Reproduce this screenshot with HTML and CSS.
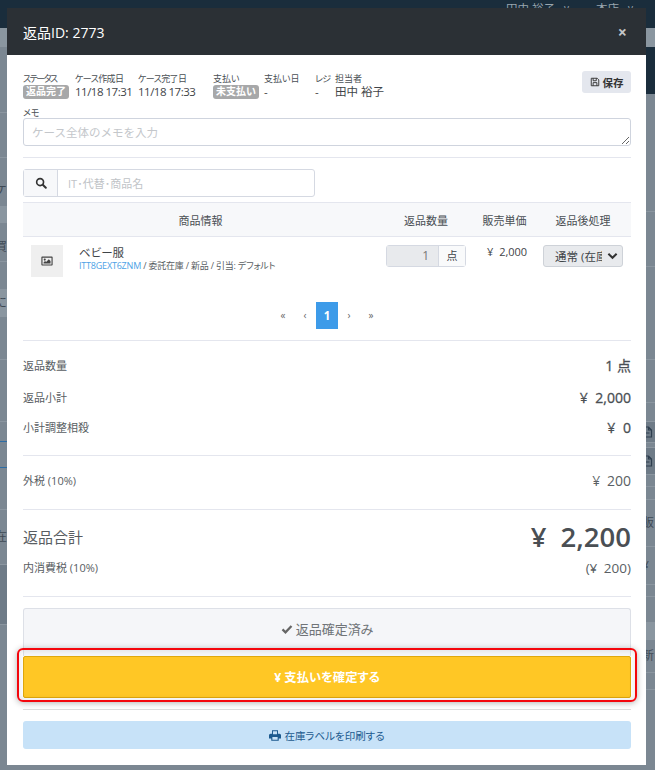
FILE: index.html
```html
<!DOCTYPE html>
<html lang="ja">
<head>
<meta charset="utf-8">
<title>返品ID: 2773</title>
<link rel="stylesheet" href="styles.css">
</head>
<body>
<div class="page">
  <div class="nav"><span>田中 裕子</span><span class="nav-v">v</span><span class="nav-s">本店</span><span class="nav-v">v</span></div>
  <div class="strips">
    <div class="strip">
      <div class="bk h19 light"></div><div class="bk h66"></div><div class="bk h45"></div>
      <div class="bk h49 t pt16"><span class="bt">ケ</span></div><div class="bk h16 light"></div><div class="bk h39 t pt10"><span class="bt">買</span></div><div class="bk h28"></div>
      <div class="bk h27 light t"><span class="bt">には</span></div><div class="bk h43"></div><div class="bk h62"></div><div class="bk h20 blue"></div><div class="bk h26 blue"></div>
      <div class="bk h42"></div><div class="bk h55 t"><span class="bt">在</span></div><div class="bk h60 dim"></div>
    </div>
    <div class="strip right">
      <div class="bk h19 light"></div><div class="bk-dark h47"></div><div class="bk h118"></div><div class="bk h55"></div><div class="bk h93"></div><div class="bk h43"></div><div class="bk h19"></div>
      <div class="bk h21 dim t"><svg viewBox="0 0 12 12" class="doc"><path d="M1.500 1h6l3 3v7h-9zM7.500 1v3h3M3.500 7h5" fill="none" stroke="#2e3e4e" stroke-width="1.200"/></svg></div><div class="bk h5"></div><div class="bk h27 dim t"><svg viewBox="0 0 12 12" class="doc"><path d="M1.500 1h6l3 3v7h-9zM7.500 1v3h3M3.500 7h5" fill="none" stroke="#2e3e4e" stroke-width="1.200"/></svg></div>
      <div class="bk h12"></div><div class="bk h13"></div><div class="bk h47 t"><span class="br">販</span></div><div class="bk h38 t"><span class="br">¥</span></div>
      <div class="bk h12"></div><div class="bk h26"></div><div class="bk h17 light"></div><div class="bk h33 t"><span class="br">新</span></div><div class="bk h17"></div>
    </div>
  </div>
</div>

<div class="modal">
  <header class="m-head">
    <h1>返品ID: 2773</h1>
    <span class="close">×</span>
  </header>
  <div class="m-body">
    <div class="meta">
      <div class="mc w52"><label class="tighter">ステータス</label><span class="badge">返品完了</span></div>
      <div class="mc w64"><label class="tight">ケース作成日</label><span class="val">11/18 17:31</span></div>
      <div class="mc w75"><label class="tight">ケース完了日</label><span class="val">11/18 17:33</span></div>
      <div class="mc w51"><label>支払い</label><span class="badge">未支払い</span></div>
      <div class="mc w51"><label>支払い日</label><span>-</span></div>
      <div class="mc w20"><label class="tight">レジ</label><span>-</span></div>
      <div class="mc grow"><label>担当者</label><span class="staff">田中 裕子</span></div>
      <button class="save"><svg viewBox="0 0 16 16" class="ic10"><path d="M2 2h9.500L14 4.500V14H2zM5 2v4h5V2M5 14V9h6v5" fill="none" stroke="#333" stroke-width="1.500"/></svg> 保存</button>
    </div>
    <div class="memo">
      <label>メモ</label>
      <textarea placeholder="ケース全体のメモを入力"></textarea>
    </div>
    <hr class="hr h1st">
    <div class="search">
      <span class="s-add"><svg viewBox="0 0 16 16" class="ic12"><circle cx="6.800" cy="6.800" r="4.600" fill="none" stroke="#333" stroke-width="2.200"/><path d="M10.400 10.400l4 4" stroke="#333" stroke-width="2.600" stroke-linecap="round"/></svg></span>
      <span class="s-ph">IT･代替･商品名</span>
    </div>
    <div class="thead">
      <div class="c-info">商品情報</div>
      <div class="c-qty">返品数量</div>
      <div class="c-price">販売単価</div>
      <div class="c-after">返品後処理</div>
    </div>
    <div class="trow">
      <div class="c-info info">
        <div class="thumb"><svg viewBox="0 0 16 14" class="ic12"><path fill-rule="evenodd" d="M1.500 1h13a1 1 0 0 1 1 1v10a1 1 0 0 1-1 1h-13a1 1 0 0 1-1-1V2a1 1 0 0 1 1-1zM2 2.500v9h12v-9zM5 3.700a1.400 1.400 0 1 1 0 2.800 1.400 1.400 0 0 1 0-2.800zM3.400 10.400V9l2-2 1.400 1.300 3.600-3.600 2.300 2.300v3.400z" fill="#444"/></svg></div>
        <div class="pname">
          <div class="pn">ベビー服</div>
          <div class="ps"><a>ITT8GEXT6ZNM</a> / 委託在庫 / 新品 / 引当: デフォルト</div>
        </div>
      </div>
      <div class="c-qty"><div class="qty"><span class="q-num">1</span><span class="q-unit">点</span></div></div>
      <div class="c-price price">¥ 2,000</div>
      <div class="c-after"><div class="sel"><span class="sel-t">通常 (在庫)</span><svg viewBox="0 0 12 8" class="ic-ch"><path d="M1.500 1.500L6 6l4.500-4.500" fill="none" stroke="#333" stroke-width="2.200"/></svg></div></div>
    </div>
    <nav class="pager">
      <span>«</span><span>‹</span><span class="cur">1</span><span>›</span><span>»</span>
    </nav>
    <hr class="hr">
    <div class="sum s1"><span>返品数量</span><b class="unit">1 点</b></div>
    <div class="sum s2"><span>返品小計</span><b>¥ 2,000</b></div>
    <div class="sum s3"><span>小計調整相殺</span><b>¥ 0</b></div>
    <hr class="hr hr-a">
    <div class="sum s4"><span>外税 (10%)</span><em>¥ 200</em></div>
    <hr class="hr hr-b">
    <div class="total"><span>返品合計</span><strong>¥ 2,200</strong></div>
    <div class="sum s5"><span>内消費税 (10%)</span><em>(¥ 200)</em></div>
    <hr class="hr hr-c">
    <div class="btn done"><svg viewBox="0 0 16 14" class="ic12"><path d="M2 7.500l4 4 8-8.500" fill="none" stroke="#666" stroke-width="3"/></svg> 返品確定済み</div>
    <div class="pay-wrap">
      <div class="btn pay">¥ 支払いを確定する</div>
    </div>
    <hr class="hr hr-d">
    <div class="btn label"><svg viewBox="0 0 16 14" class="ic11"><path fill-rule="evenodd" d="M4 0h8v4.500h2a2 2 0 0 1 2 2V11h-3v3H3v-3H0V6.500a2 2 0 0 1 2-2h2zM5.300 1.300v4h5.400v-4zM4.500 9v3.700h7V9z" fill="#1c5a8f"/></svg> 在庫ラベルを印刷する</div>
  </div>
</div>
</body>
</html>
```

FILE: styles.css
```css
* { box-sizing: border-box; }
html, body { margin: 0; padding: 0; height: 100%; }
body {
  width: 655px;
  height: 770px;
  overflow: hidden;
  background: #7b8792;
  font-family: "Open Sans", "Noto Sans CJK JP", sans-serif;
  font-feature-settings: "palt";
  color: #3f4448;
  font-size: 12px;
  position: relative;
}
.page { height: 770px; display: flex; flex-direction: column; }
.nav {
  height: 28px;
  background: #1a2d3c;
  display: flex;
  justify-content: flex-end;
  padding: 0 22px 0 0;
  color: #9ba6ae;
  font-size: 11.500px;
  line-height: 17px;
  flex: none;
}
.nav-s { margin-left: 27px; }
.nav-v { font-size: 10px; margin-left: 9px; }
.strips { display: flex; justify-content: space-between; flex: 1; }
.strip { width: 7px; overflow: hidden; }
.strip.right { width: 9px; }
.bk { border-bottom: 1px solid #8b96a0; overflow: hidden; position: relative; }
.bk-dark { background: #1a2d3c; }
.light { background: #8a96a0; }
.dim { background: #6e7b87; }
.blue { border-bottom-color: #2d6da5; }
.t { font-size: 12px; color: #3f4a55; line-height: 1; display: flex; align-items: center; }
.pt16 { padding-top: 16px; }
.pt10 { padding-top: 10px; }
.bt { margin-left: -5px; white-space: nowrap; }
.br { margin-left: -4px; white-space: nowrap; }
.doc { width: 12px; height: 12px; margin-left: -5px; flex: none; }
.h5 { height: 5px; } .h12 { height: 12px; } .h13 { height: 13px; } .h16 { height: 16px; }
.h17 { height: 17px; } .h19 { height: 19px; } .h20 { height: 20px; } .h21 { height: 21px; }
.h26 { height: 26px; } .h27 { height: 27px; } .h28 { height: 28px; } .h33 { height: 33px; }
.h38 { height: 38px; } .h39 { height: 39px; } .h42 { height: 42px; } .h43 { height: 43px; }
.h45 { height: 45px; } .h47 { height: 47px; } .h49 { height: 49px; } .h55 { height: 55px; }
.h60 { height: 60px; } .h62 { height: 62px; } .h66 { height: 66px; } .h93 { height: 93px; }
.h118 { height: 118px; }

.modal {
  position: absolute;
  top: 8px;
  left: 7px;
  width: 639px;
  height: 757px;
  background: #fff;
}
.m-head {
  height: 47px;
  background: #2b3035;
  color: #fff;
  display: flex;
  align-items: center;
  justify-content: space-between;
  padding: 0 19px 0 16px;
}
.m-head h1 { margin: 0; font-size: 14px; font-weight: 400; }
.close { font-size: 16px; font-weight: 700; color: #c4c6c8; line-height: 1; }
.m-body { padding: 16px 15px 0 16px; }

.meta { display: flex; height: 22px; align-items: flex-start; }
.mc { display: flex; flex-direction: column; font-size: 11.500px; line-height: 14px; white-space: nowrap; }
.mc label { font-size: 9px; line-height: 13px; color: #4a4f54; height: 13px; margin-top: 1px; }
.mc .tight { letter-spacing: -0.6px; }
.mc .tighter { letter-spacing: -1.500px; }
.val { letter-spacing: -0.5px; }
.w52 { width: 52px; } .w64 { width: 63px; } .w75 { width: 75px; }
.w51 { width: 51px; } .w20 { width: 20px; }
.grow { flex: 1; }
.badge {
  align-self: flex-start;
  background: #a7a8a9;
  color: #fff;
  font-size: 10px;
  font-weight: 700;
  line-height: 13px;
  height: 14px;
  padding: 0 3px;
  border-radius: 3px;
}
.staff { font-size: 11.500px; letter-spacing: 0; }
.save {
  width: 49px;
  height: 22px;
  border: 0;
  border-radius: 3px;
  background: #e4e7ee;
  color: #333;
  font: 700 10.500px "Open Sans", "Noto Sans CJK JP", sans-serif;
  display: flex;
  align-items: center;
  justify-content: center;
  gap: 3px;
  padding: 0;
}
.ic10 { width: 10px; height: 10px; }
.ic11 { width: 12px; height: 11px; }
.ic12 { width: 12px; height: 12px; }

.memo { margin-top: 14px; }
.memo label { display: block; font-size: 9px; line-height: 11px; height: 11px; color: #4a4f54; }
.memo textarea {
  display: block;
  width: 100%;
  height: 28px;
  border: 1px solid #cfd4de;
  border-radius: 3px;
  padding: 5px 8px;
  font: 11.500px "Open Sans", "Noto Sans CJK JP", sans-serif;
  resize: vertical;
  outline: 0;
}
.memo textarea::placeholder { color: #c4c7cb; }

.hr { border: 0; border-top: 1px solid #e4e6ee; margin: 0; height: 0; }
.h1st { margin-top: 11px; }

.search {
  margin-top: 11px;
  width: 292px;
  height: 28px;
  border: 1px solid #d5d9e2;
  border-radius: 3px;
  display: flex;
  align-items: center;
}
.s-add {
  width: 34px;
  height: 100%;
  background: #f7f8fa;
  border-right: 1px solid #d5d9e2;
  display: flex;
  align-items: center;
  justify-content: center;
}
.s-ph { margin-left: 10px; color: #c0c3c7; font-size: 11px; }

.thead {
  margin-top: 5px;
  display: flex;
  height: 35px;
  background: #f7f8fa;
  border-top: 1px solid #e4e6ee;
  border-bottom: 1px solid #e4e6ee;
  align-items: center;
  font-size: 11px;
  color: #4a4f54;
  text-align: center;
}
.c-info { width: 355px; }
.c-qty { width: 96px; }
.c-price { width: 61px; }
.c-after { flex: 1; }
.trow { display: flex; height: 65px; align-items: flex-start; }
.info { display: flex; padding: 8px 0 0 8px; }
.thumb {
  width: 32px;
  height: 32px;
  background: #efefef;
  display: flex;
  align-items: center;
  justify-content: center;
}
.pname { margin-left: 16px; }
.pn { font-size: 11.500px; line-height: 16px; margin-top: 0; }
.ps { font-size: 9px; line-height: 13px; color: #585d62; margin-top: -2px; white-space: nowrap; letter-spacing: -0.2px; }
.ps a { color: #4da2e6; }
.trow .c-qty { padding: 8px 0 0 8px; }
.qty {
  width: 80px;
  height: 22px;
  border: 1px solid #d5d9e2;
  border-radius: 3px;
  display: flex;
  font-size: 12px;
}
.q-num {
  flex: 1;
  background: #e8eaed;
  text-align: right;
  padding-right: 9px;
  line-height: 20px;
  color: #777;
  border-right: 1px solid #d5d9e2;
}
.q-unit { width: 26px; text-align: center; line-height: 20px; background: #f9fafb; font-size: 11px; }
.price { font-size: 11px; padding: 7px 0 0 13px; text-align: left; white-space: nowrap; line-height: 15px; word-spacing: 3px; }
.trow .c-after { padding: 8px 0 0 8px; }
.sel {
  width: 80px;
  height: 22px;
  border: 1px solid #ced2d8;
  border-radius: 3px;
  background: #e8eaed;
  display: flex;
  align-items: center;
  padding: 0 4px 0 11px;
  font-size: 11.500px;
  overflow: hidden;
}
.sel-t { width: 47px; overflow: hidden; white-space: nowrap; flex: none; }
.ic-ch { width: 11px; height: 8px; margin-left: 5px; }

.pager {
  display: flex;
  justify-content: center;
  height: 38px;
  font-size: 10px;
  color: #666;
}
.pager span { width: 22px; height: 27px; text-align: center; line-height: 27px; }
.pager .cur { background: #3d9be9; color: #fff; font-weight: 700; font-size: 11.500px; }

.sum { display: flex; justify-content: space-between; align-items: flex-start; font-size: 11px; color: #585d62; }
.sum b { font-size: 14px; font-weight: 400; color: #4a4f54; word-spacing: 4px; -webkit-text-stroke: 0.3px #4a4f54; }
.sum b.unit { word-spacing: 0; }
.sum em { font-style: normal; font-size: 14px; font-weight: 400; color: #5a5f64; word-spacing: 3px; }
.s1 { margin-top: 15px; height: 32px; line-height: 20px; }
.s2 { height: 30px; line-height: 20px; }
.s3 { height: 37px; line-height: 20px; }
.s4 { margin-top: 15px; height: 38px; line-height: 20px; }
.total {
  margin-top: 7px;
  height: 39px;
  display: flex;
  justify-content: space-between;
  align-items: center;
  font-size: 15px;
  color: #585d62;
}
.total strong { font-size: 27.500px; font-weight: 600; color: #4a4f54; line-height: 39px; word-spacing: 7px; }
.s5 { margin-top: 2px; height: 38px; line-height: 20px; }
.s5 em { font-size: 13.500px; }

.btn { display: flex; align-items: center; justify-content: center; gap: 3px; }
.done {
  margin-top: 11px;
  height: 48px;
  padding-bottom: 8px;
  background: #f5f6f9;
  border: 1px solid #dde0e7;
  border-bottom: 0;
  border-radius: 3px 3px 0 0;
  color: #707478;
  font-size: 13px;
}
.pay-wrap { position: relative; }
.pay-wrap::after {
  content: "";
  position: absolute;
  top: -8px;
  bottom: -4px;
  left: -6px;
  right: -6px;
  border: 2px solid #f4060d;
  border-radius: 6px;
  box-shadow: 0 1px 6px rgba(0, 0, 0, 0.3), inset 0 0 6px rgba(0, 0, 0, 0.12);
  pointer-events: none;
}
.pay {
  height: 42px;
  background: #ffc725;
  border: 1px solid #e0a80c;
  border-radius: 2px;
  color: #fff;
  font-weight: 700;
  font-size: 12.300px;
}
.hr-d { margin-top: 11px; border-top-color: #dddddd; }
.label {
  margin-top: 11px;
  height: 28px;
  background: #c7e2f8;
  border-radius: 3px;
  color: #1c5a8f;
  font-size: 10.500px;
}
```
